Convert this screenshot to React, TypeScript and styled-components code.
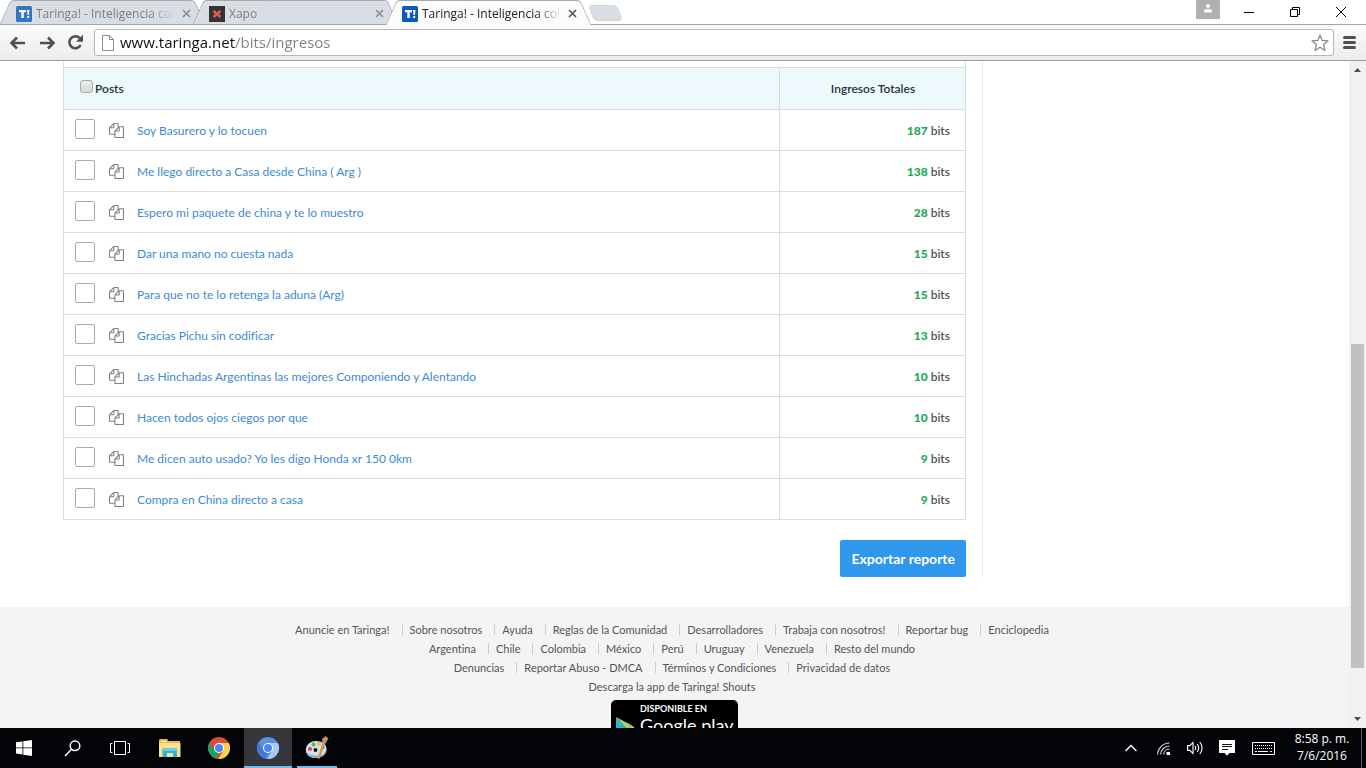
import React from "react";
import styled, { createGlobalStyle, css } from "styled-components";

const GlobalStyle = createGlobalStyle`
  * { box-sizing: border-box; }
  body { margin: 0; background: #fff; }
  button, input { font: inherit; }
  svg { display: block; flex: none; }
`;

const ui = `"Open Sans", "Noto Sans", sans-serif`;

const Desktop = styled.div`
  height: 100vh;
  display: grid;
  grid-template-rows: auto auto minmax(0, 1fr) auto;
  overflow: hidden;
  font-family: Lato, sans-serif;
  font-variant-ligatures: none;
`;

/* ---------- browser tabs ---------- */

const TabStrip = styled.header`
  display: flex;
  height: 25px;
  padding-left: 5px;
  border-bottom: 1px solid #a3a3a3;
  background: #fff;
  font-family: ${ui};
`;

const Tab = styled.button<{ $active?: boolean }>`
  position: relative;
  z-index: ${(p) => (p.$active ? 2 : 1)};
  display: flex;
  align-items: center;
  gap: 4px;
  width: 193px;
  height: 25px;
  padding: 2px 7px 0 11px;
  border: 0;
  background: none;
  font-size: 12px;
  color: ${(p) => (p.$active ? "#222" : "#7b7f84")};
  text-align: left;

  &::before,
  &::after {
    content: "";
    position: absolute;
    z-index: -1;
    top: 0;
    bottom: ${(p) => (p.$active ? "0" : "1px")};
    width: 60%;
    border-top: 1px solid #a8a8a8;
    background: ${(p) => (p.$active ? "#fbfbfb" : "#d9dee4")};
  }
  &::before {
    left: 0;
    border-left: 1px solid #a8a8a8;
    border-top-left-radius: 4px;
    transform: skewX(-24deg);
  }
  &::after {
    right: -2px;
    border-right: 1px solid #a8a8a8;
    border-top-right-radius: 4px;
    transform: skewX(24deg);
  }
`;

const TabTitle = styled.span`
  flex: 1;
  overflow: hidden;
  white-space: nowrap;
  mask-image: linear-gradient(90deg, #000 80%, transparent 98%);
`;

const NewTab = styled.button`
  width: 29px;
  height: 16px;
  margin: 5px 0 0 7px;
  border: 1px solid #d0d4d9;
  border-radius: 4px;
  background: #d9dee4;
  transform: skewX(20deg);
`;

const WindowButtons = styled.div`
  display: flex;
  margin: 0 2px 0 auto;
`;

const ProfileButton = styled.button`
  display: flex;
  justify-content: center;
  width: 24px;
  height: 19px;
  margin-right: 6px;
  padding: 4px 0 0;
  border: 0;
  background: #b0b0b0;
`;

const WindowButton = styled.button`
  display: grid;
  place-items: center;
  width: 46px;
  height: 24px;
  padding: 0;
  border: 0;
  background: none;
`;

/* ---------- browser toolbar ---------- */

const Toolbar = styled.nav`
  display: flex;
  align-items: center;
  height: 36px;
  padding: 0 8px;
  border-bottom: 1px solid #9c9c9c;
  background: linear-gradient(#fbfbfb, #ececec);
  font-family: ${ui};
`;

const ToolButton = styled.button`
  display: grid;
  place-items: center;
  width: 29px;
  height: 28px;
  padding: 0;
  border: 0;
  background: none;

  &:first-child { width: 20px; margin-right: 4px; }
  &:last-child { width: 17px; margin-left: 7px; }
`;

const AddressBar = styled.div`
  display: flex;
  flex: 1;
  align-items: center;
  gap: 6px;
  height: 27px;
  margin-left: 4px;
  padding: 0 4px 0 7px;
  border: 1px solid #b8b8b8;
  border-radius: 3px;
  background: #fff;
`;

const AddressInput = styled.input`
  flex: 1;
  min-width: 0;
  padding: 0 0 2px;
  border: 0;
  outline: 0;
  font-size: 15px;
  color: transparent;
  background: linear-gradient(90deg, #111 115px, #808080 115px);
  background-clip: text;
`;

const StarButton = styled.button`
  padding: 0;
  border: 0;
  background: none;
`;

/* ---------- page ---------- */

const Viewport = styled.div`
  display: flex;
  overflow: hidden;
`;

const Page = styled.div`
  flex: 1;
  min-width: 0;
  overflow: hidden;
`;

const Columns = styled.div`
  max-width: 1223px;
  margin: 0 auto 31px;
`;

const Main = styled.main`
  width: 920px;
  padding-right: 16px;
  border-right: 1px solid #ececec;
`;

const Frame = styled.div`
  padding-top: 6px;
  border: solid #dcdcdc;
  border-width: 0 1px;
`;

const Earnings = styled.table`
  width: 100%;
  border-spacing: 0;
  table-layout: fixed;
  font-size: 12px;
  line-height: 20px;
`;

const cell = css`
  border-bottom: 1px solid #dcdcdc;
`;

const HeadCell = styled.th<{ $total?: boolean }>`
  height: 43px;
  padding: 0 15px 0 16px;
  border: solid #dcdcdc;
  border-width: 1px 0 1px ${(p) => (p.$total ? "1px" : "0")};
  width: ${(p) => (p.$total ? "186px" : "auto")};
  background: #eef9fe;
  color: #1f3345;
  font-weight: 600;
  text-align: ${(p) => (p.$total ? "center" : "left")};
`;

const HeadLabel = styled.label`
  display: flex;
  align-items: center;
  gap: 2px;
`;

const HeadCheck = styled.input`
  appearance: none;
  width: 13px;
  height: 13px;
  margin: 0 0 4px;
  border: 1px solid #a9a9a9;
  border-radius: 3px;
  background: linear-gradient(#ececec, #d8d8d8);
`;

const PostCell = styled.td`
  height: 41px;
  padding: 0 11px;
  ${cell}
`;

const TotalCell = styled.td`
  padding: 2px 15px 0;
  ${cell}
  border-left: 1px solid #dcdcdc;
  color: #555;
  font-weight: 600;
  text-align: right;
`;

const Amount = styled.b`
  color: #1faa59;
`;

const PostLine = styled.div`
  display: flex;
  align-items: center;
`;

const RowCheck = styled.input`
  appearance: none;
  width: 20px;
  height: 20px;
  margin: 0 14px 2px 0;
  border: 1px solid #aaa;
  border-radius: 2px;
  background: #fff;
`;

const PostLink = styled.a`
  padding-top: 2px;
  margin-left: 13px;
  color: #3d8ad6;
  text-decoration: none;
`;

const Actions = styled.div`
  display: flex;
  justify-content: flex-end;
  padding-top: 20px;
  margin-bottom: -1px;
`;

const ExportButton = styled.button`
  height: 37px;
  padding: 0 11px;
  border: 0;
  border-radius: 2px;
  background: #2f97ec;
  color: #fff;
  font-size: 14px;
  font-weight: 700;
`;

const Footer = styled.footer`
  display: flex;
  flex-direction: column;
  align-items: center;
  min-height: 220px;
  padding: 13px 5px 0 0;
  background: #f4f4f4;
  color: #555;
  font-size: 11px;
  line-height: 19px;
`;

const FooterRow = styled.ul`
  display: flex;
  margin: 0;
  padding: 0;
  list-style: none;
`;

const FooterItem = styled.li`
  display: flex;
  align-items: center;

  & + &::before {
    content: "";
    width: 1px;
    height: 11px;
    margin: 0 7px 0 12px;
    background: #ccc;
  }
`;

const FooterLink = styled.a`
  color: inherit;
  text-decoration: none;
`;

const PlayBadge = styled.a`
  display: grid;
  grid-template-columns: 20px auto;
  column-gap: 4px;
  width: 127px;
  height: 44px;
  margin: 4px 0 0 5px;
  padding: 3px 5px;
  border-radius: 5px;
  background: #000;
  color: #fff;
  text-decoration: none;

  & > svg { align-self: end; }
`;

const BadgeText = styled.span`
  display: flex;
  flex-direction: column;
  white-space: nowrap;
`;

const BadgeSmall = styled.small`
  font: 700 9px/12px Lato, sans-serif;
`;

const BadgeName = styled.span`
  font: 18px/20px Lato, sans-serif;
`;

const Scrollbar = styled.aside`
  display: flex;
  flex-direction: column;
  align-items: center;
  width: 17px;
  padding: 7px 0;
  background: #f1f1f1;
`;

const Track = styled.div`
  display: grid;
  flex: 1;
  grid-template-rows: 272fr 324fr 49fr;
  width: 13px;
`;

const Thumb = styled.div`
  grid-row: 2;
  background: #c1c1c1;
`;

/* ---------- taskbar ---------- */

const Taskbar = styled.footer`
  display: flex;
  justify-content: space-between;
  height: 40px;
  background: #020408;
  color: #fff;
  font-family: ${ui};
`;

const Group = styled.div`
  display: flex;
  align-items: center;
`;

const Apps = styled.div`
  display: flex;
  gap: 1px;
  margin-left: 2px;
`;

const Launcher = styled.button<{ $state?: "active" | "open" }>`
  display: grid;
  place-items: center;
  width: 48px;
  height: 40px;
  padding: 0;
  border: 0;
  background: ${(p) =>
    p.$state === "active"
      ? "linear-gradient(#76b9ed, #76b9ed) center bottom / 48px 2px no-repeat #35373b"
      : p.$state === "open"
        ? "linear-gradient(#76b9ed, #76b9ed) center bottom / 40px 2px no-repeat"
        : "none"};
`;

const TrayButton = styled.button<{ $wide?: boolean }>`
  display: grid;
  place-items: center;
  width: ${(p) => (p.$wide ? "40px" : "32px")};
  height: 40px;
  padding: 0;
  border: 0;
  background: none;
`;

const Clock = styled.time`
  width: 78px;
  padding-bottom: 2px;
  font-size: 12px;
  line-height: 17px;
  text-align: center;
`;

const ShowDesktop = styled.button`
  width: 5px;
  height: 40px;
  padding: 0;
  border: 0;
  border-left: 1px solid #55585c;
  background: none;
`;

/* ---------- drawings ---------- */

const TaringaMark = ({ faded }: { faded?: boolean }) => (
  <svg width="16" height="16" viewBox="0 0 16 16" opacity={faded ? 0.8 : 1}>
    <rect width="16" height="16" rx="1.5" fill="#0a5cb8" />
    <path d="M3 4h7v2.2H7.8V12H5.3V6.200H3zM11 4h2.500l-.5 5h-1.500zM11.200 10h2v2h-2z" fill="#fff" />
  </svg>
);

const XapoMark = () => (
  <svg width="16" height="16" viewBox="0 0 16 16">
    <rect width="16" height="16" fill="#333" />
    <path d="M4.500 5 11.500 11M11.500 5 4.500 11" stroke="#e8574f" strokeWidth="2.400" />
  </svg>
);

const CloseMark = ({ dark }: { dark?: boolean }) => (
  <svg width="9" height="9" viewBox="0 0 9 9">
    <path d="M1 1l7 7M8 1 1 8" stroke={dark ? "#555" : "#8b8f94"} strokeWidth="1.600" />
  </svg>
);

const Arrow = ({ flip }: { flip?: boolean }) => (
  <svg width="18" height="16" viewBox="0 0 18 16">
    <g transform={flip ? "translate(18 0) scale(-1 1)" : undefined} fill="none" stroke="#505050" strokeWidth="2.600">
      <path d="M16 8H3M8 2.500 2.500 8 8 13.500" />
    </g>
  </svg>
);

const Reload = () => (
  <svg width="17" height="17" viewBox="0 0 17 17">
    <path d="M13.600 11.200A6 6 0 1 1 12.800 4.200" fill="none" stroke="#505050" strokeWidth="2.600" />
    <path d="M16 .8v7H9z" fill="#505050" />
  </svg>
);

const PageIcon = () => (
  <svg width="12" height="16" viewBox="0 0 12 16">
    <path d="M.5.500h7l4 4v11H.5zM7.500.5v4h4" fill="#fff" stroke="#8c8c8c" />
  </svg>
);

const Star = () => (
  <svg width="18" height="18" viewBox="0 0 18 18">
    <path
      d="M9 1l2.200 5.400 5.800.4-4.500 3.700 1.500 5.900L9 13.200l-5 3.200 1.500-5.900L1 6.800l5.800-.4z"
      fill="#fff"
      stroke="#888"
      strokeWidth="1.200"
      strokeLinejoin="round"
    />
  </svg>
);

const MenuIcon = () => (
  <svg width="13" height="13" viewBox="0 0 13 13">
    <path d="M1.500 1.500h10M1.500 6.500h10M1.500 11.500h10" stroke="#505050" strokeWidth="3" strokeLinecap="round" />
  </svg>
);

const Files = () => (
  <svg width="15" height="15" viewBox="0 0 1792 1792" fill="#808080">
    <path d="M1696 384q40 0 68 28t28 68v1216q0 40-28 68t-68 28h-960q-40 0-68-28t-28-68v-288h-544q-40 0-68-28t-28-68v-672q0-40 20-88t48-76l408-408q28-28 76-48t88-20h416q40 0 68 28t28 68v328q68-40 128-40h416zm-544 213l-299 299h299v-299zm-640-384l-299 299h299v-299zm196 647l316-316v-416h-384v416q0 40-28 68t-68 28h-416v640h512v-256q0-40 20-88t48-76zm956 804v-1152h-384v416q0 40-28 68t-68 28h-416v640h896z" />
  </svg>
);

const ScrollArrow = ({ down }: { down?: boolean }) => (
  <svg width="7" height="4" viewBox="0 0 7 4">
    <path d={down ? "M0 0h7L3.500 4z" : "M0 4h7L3.500 0z"} fill="#505050" />
  </svg>
);

const PlayTriangle = () => (
  <svg width="20" height="24" viewBox="0 0 20 24">
    <path d="M0 0v24l11-12z" fill="#35b5c8" />
    <path d="M0 0l16 8.500L11 12z" fill="#a5d36c" />
    <path d="M16 8.500 20 12l-4 3.500L11 12z" fill="#f7b767" />
    <path d="M0 24l16-8.500L11 12z" fill="#e0524d" />
  </svg>
);

const WindowsLogo = () => (
  <svg width="16" height="16" viewBox="0 0 16 16" fill="#fff">
    <path d="M0 2.300 6.500 1.400v6.100H0zM7.300 1.300 16 0v7.500H7.300zM0 8.300h6.500v6.200L0 13.600zM7.300 8.300H16V16l-8.700-1.300z" />
  </svg>
);

const SearchIcon = () => (
  <svg width="17" height="17" viewBox="0 0 17 17" fill="none" stroke="#fff" strokeWidth="1.500">
    <circle cx="11" cy="5.800" r="4.800" />
    <path d="M7.500 9.300 1 16" />
  </svg>
);

const TaskView = () => (
  <svg width="20" height="14" viewBox="0 0 20 14" fill="none" stroke="#fff">
    <path d="M4.500.500h11v13h-11zM2.500 2.500h-2v9h2M17.500 2.500h2v9h-2" />
  </svg>
);

const Explorer = () => (
  <svg width="22" height="18" viewBox="0 0 22 18">
    <path d="M0 1 1 0h7l1.500 2H21v16H0z" fill="#e8b94e" />
    <path d="M0 4h21.500v14H0z" fill="#fbe08e" />
    <path d="M3.500 18V9.500h14.500V18h-4v-4H8v4z" fill="#2fb0dd" />
    <path d="M3.500 9.500h14.500V12H3.500z" fill="#65cdec" />
    <path d="M2 2h5v1H2z" fill="#fff3bd" />
  </svg>
);

const ChromeLogo = ({ colors }: { colors: [string, string, string, string] }) => (
  <svg width="22" height="22" viewBox="0 0 22 22">
    <circle cx="11" cy="11" r="11" fill={colors[0]} />
    <path d="M1.500 5.500 6.700 13.500 11 16l-2.500 5.700A11 11 0 0 1 1.500 5.500z" fill={colors[1]} />
    <path d="M11 6h9.800A11 11 0 0 1 10.300 22L15.300 13.500z" fill={colors[2]} />
    <circle cx="11" cy="11" r="5" fill="#fff" />
    <circle cx="11" cy="11" r="4" fill={colors[3]} />
  </svg>
);

const Paint = () => (
  <svg width="24" height="24" viewBox="0 0 24 24">
    <path d="M11 5C5 5 .8 9 .8 14S5 22 11 22c6 0 10.500-3.500 10.500-9C21.500 8 17 5 11 5z" fill="#cfe3ee" />
    <path d="M1 15c1 4.500 5 7 10 7 6 0 10.500-3.500 10.500-9-1.500 5-5 6.500-9.500 6.500C7 19.500 3 18 1 15z" fill="#91b6cc" />
    <circle cx="5" cy="13" r="2" fill="#dc4a43" />
    <circle cx="8.500" cy="8.600" r="2" fill="#5fb749" />
    <circle cx="14" cy="7.800" r="2" fill="#efb73e" />
    <circle cx="18" cy="11.500" r="1.800" fill="#4f88d8" />
    <circle cx="10.500" cy="14" r="2" fill="#11151b" />
    <path d="M17.500 7 20 8 14.500 23l-2-.8z" fill="#e2923d" />
    <path d="M17.500 7.200 17 3l3.500-3 3 2.500L20 8.300z" fill="#bf9066" />
  </svg>
);

const Chevron = () => (
  <svg width="12" height="8" viewBox="0 0 12 8">
    <path d="M.6 7 6 1.500 11.400 7" fill="none" stroke="#fff" strokeWidth="1.400" />
  </svg>
);

const Wifi = () => (
  <svg width="13" height="13" viewBox="0 0 13 13" fill="none" stroke="#ddd" strokeWidth="1.100">
    <path d="M.6 12.500A12 12 0 0 1 12.500 1M3.600 12.500A9 9 0 0 1 12.500 4M6.600 12.500A6 6 0 0 1 12.500 7" />
    <path d="M9.500 13v-3h3.500v3z" fill="#fff" stroke="none" />
  </svg>
);

const Volume = () => (
  <svg width="17" height="14" viewBox="0 0 17 14" fill="none" stroke="#fff" strokeWidth="1.100">
    <path d="M.6 4.600h2.200L6 1.600v10.800l-3.200-3H.6zM8 5q1.400 2 0 4M10.300 3q2.800 4 0 8M12.800 1q4.600 6 0 12" />
  </svg>
);

const Message = () => (
  <svg width="16" height="16" viewBox="0 0 16 16">
    <path d="M0 0h16v13h-5.500L8 15.800 5.500 13H0z" fill="#fff" />
    <path d="M3 4.500h10M3 6.500h10M3 9.500h6" stroke="#111" />
  </svg>
);

const KeyboardIcon = () => (
  <svg width="23" height="13" viewBox="0 0 23 13" fill="none" stroke="#fff">
    <path d="M.5.500h22v12H.5z" />
    <path d="M3 3.500h17M3 6.500h17" strokeDasharray="1 1" />
    <path d="M3 9.500h2M6 9.500h10M18 9.500h2" />
  </svg>
);

/* ---------- data ---------- */

const posts: [string, number][] = [
  ["Soy Basurero y lo tocuen", 187],
  ["Me llego directo a Casa desde China ( Arg )", 138],
  ["Espero mi paquete de china y te lo muestro", 28],
  ["Dar una mano no cuesta nada", 15],
  ["Para que no te lo retenga la aduna (Arg)", 15],
  ["Gracias Pichu sin codificar", 13],
  ["Las Hinchadas Argentinas las mejores Componiendo y Alentando", 10],
  ["Hacen todos ojos ciegos por que", 10],
  ["Me dicen auto usado? Yo les digo Honda xr 150 0km", 9],
  ["Compra en China directo a casa", 9],
];

const footerRows = [
  ["Anuncie en Taringa!", "Sobre nosotros", "Ayuda", "Reglas de la Comunidad", "Desarrolladores", "Trabaja con nosotros!", "Reportar bug", "Enciclopedia"],
  ["Argentina", "Chile", "Colombia", "México", "Perú", "Uruguay", "Venezuela", "Resto del mundo"],
  ["Denuncias", "Reportar Abuso - DMCA", "Términos y Condiciones", "Privacidad de datos"],
  ["Descarga la app de Taringa! Shouts"],
];

export default function App() {
  return (
    <Desktop>
      <GlobalStyle />
      <TabStrip>
        <Tab>
          <TaringaMark faded />
          <TabTitle>Taringa! - Inteligencia cole</TabTitle>
          <CloseMark />
        </Tab>
        <Tab>
          <XapoMark />
          <TabTitle>Xapo</TabTitle>
          <CloseMark />
        </Tab>
        <Tab $active>
          <TaringaMark />
          <TabTitle>Taringa! - Inteligencia cole</TabTitle>
          <CloseMark dark />
        </Tab>
        <NewTab aria-label="Nueva pestaña" />
        <WindowButtons>
          <ProfileButton aria-label="Perfil">
            <svg width="10" height="9" viewBox="0 0 10 9" fill="#fff">
              <circle cx="5" cy="2" r="2" />
              <path d="M1 8.500V7q0-2 4-2t4 2v1.500z" />
            </svg>
          </ProfileButton>
          <WindowButton aria-label="Minimizar">
            <svg width="10" height="10" viewBox="0 0 10 10"><path d="M0 5.500h10" stroke="#000" /></svg>
          </WindowButton>
          <WindowButton aria-label="Restaurar">
            <svg width="10" height="10" viewBox="0 0 10 10" fill="none" stroke="#000">
              <path d="M.5 2.500h7v7h-7zM2.500 2.500v-2h7v7h-2" />
            </svg>
          </WindowButton>
          <WindowButton aria-label="Cerrar">
            <svg width="10" height="10" viewBox="0 0 10 10"><path d="M0 0l10 10M10 0 0 10" stroke="#000" /></svg>
          </WindowButton>
        </WindowButtons>
      </TabStrip>

      <Toolbar>
        <ToolButton aria-label="Atrás"><Arrow /></ToolButton>
        <ToolButton aria-label="Adelante"><Arrow flip /></ToolButton>
        <ToolButton aria-label="Recargar"><Reload /></ToolButton>
        <AddressBar>
          <PageIcon />
          <AddressInput aria-label="Dirección" defaultValue="www.taringa.net/bits/ingresos" />
          <StarButton aria-label="Favorito"><Star /></StarButton>
        </AddressBar>
        <ToolButton aria-label="Menú"><MenuIcon /></ToolButton>
      </Toolbar>

      <Viewport>
        <Page>
          <Columns>
            <Main>
              <Frame>
                <Earnings>
                  <thead>
                    <tr>
                      <HeadCell>
                        <HeadLabel>
                          <HeadCheck type="checkbox" />
                          Posts
                        </HeadLabel>
                      </HeadCell>
                      <HeadCell $total>Ingresos Totales</HeadCell>
                    </tr>
                  </thead>
                  <tbody>
                    {posts.map(([title, bits]) => (
                      <tr key={title}>
                        <PostCell>
                          <PostLine>
                            <RowCheck type="checkbox" aria-label={title} />
                            <Files />
                            <PostLink href="#">{title}</PostLink>
                          </PostLine>
                        </PostCell>
                        <TotalCell>
                          <Amount>{bits}</Amount> bits
                        </TotalCell>
                      </tr>
                    ))}
                  </tbody>
                </Earnings>
              </Frame>
              <Actions>
                <ExportButton>Exportar reporte</ExportButton>
              </Actions>
            </Main>
          </Columns>
          <Footer>
            {footerRows.map((row) => (
              <FooterRow key={row[0]}>
                {row.map((label) => (
                  <FooterItem key={label}>
                    <FooterLink href="#">{label}</FooterLink>
                  </FooterItem>
                ))}
              </FooterRow>
            ))}
            <PlayBadge href="#">
              <PlayTriangle />
              <BadgeText>
                <BadgeSmall>DISPONIBLE EN</BadgeSmall>
                <BadgeName>Google play</BadgeName>
              </BadgeText>
            </PlayBadge>
          </Footer>
        </Page>
        <Scrollbar aria-hidden>
          <ScrollArrow />
          <Track><Thumb /></Track>
          <ScrollArrow down />
        </Scrollbar>
      </Viewport>

      <Taskbar>
        <Group>
          <Launcher aria-label="Inicio"><WindowsLogo /></Launcher>
          <Launcher aria-label="Buscar"><SearchIcon /></Launcher>
          <Launcher aria-label="Vista de tareas"><TaskView /></Launcher>
          <Apps>
            <Launcher aria-label="Explorador"><Explorer /></Launcher>
            <Launcher aria-label="Chrome"><ChromeLogo colors={["#dd4b3e", "#1fa15d", "#fdd04c", "#4a8af4"]} /></Launcher>
            <Launcher aria-label="Chromium" $state="active"><ChromeLogo colors={["#5b8fe8", "#4377d6", "#a9c8f8", "#4a86ee"]} /></Launcher>
            <Launcher aria-label="Paint" $state="open"><Paint /></Launcher>
          </Apps>
        </Group>
        <Group>
          <TrayButton aria-label="Iconos ocultos"><Chevron /></TrayButton>
          <TrayButton aria-label="Red"><Wifi /></TrayButton>
          <TrayButton aria-label="Volumen"><Volume /></TrayButton>
          <TrayButton aria-label="Notificaciones"><Message /></TrayButton>
          <TrayButton aria-label="Teclado" $wide><KeyboardIcon /></TrayButton>
          <Clock>
            8:58 p. m.
            <br />
            7/6/2016
          </Clock>
          <ShowDesktop aria-label="Mostrar escritorio" />
        </Group>
      </Taskbar>
    </Desktop>
  );
}
